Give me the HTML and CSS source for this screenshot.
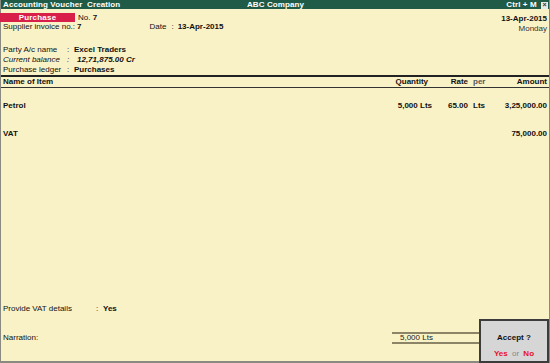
FILE: index.html
```html
<!DOCTYPE html>
<html lang="en">
<head>
    <meta charset="UTF-8">
    <title>Accounting Voucher Creation</title>
    <link rel="stylesheet" href="styles.css">
</head>
<body>
    <div class="screen">
        <div class="titlebar">
            <span class="title-left">Accounting Voucher&nbsp; Creation</span>
            <span class="title-center">ABC Company</span>
            <span class="title-right">Ctrl + M <span class="close-box">&#215;</span></span>
        </div>

        <div class="header">
            <div class="header-left">
                <div class="voucher-row">
                    <span class="voucher-type">Purchase</span>
                    <span class="voucher-no">No. <b>7</b></span>
                </div>
                <div class="supplier-row">
                    <span class="supplier-label">Supplier invoice no.:</span>
                    <b class="supplier-no">7</b>
                    <span class="date-label">Date</span>
                    <span class="colon">:</span>
                    <b>13-Apr-2015</b>
                </div>
            </div>
            <div class="header-right">
                <b>13-Apr-2015</b>
                <span class="day">Monday</span>
            </div>
        </div>

        <div class="party">
            <div class="field">
                <span class="field-label">Party A/c name</span>
                <span class="field-colon">:</span>
                <b>Excel Traders</b>
            </div>
            <div class="field italic">
                <span class="field-label">Current balance</span>
                <span class="field-colon">:</span>
                <b class="balance">12,71,875.00 Cr</b>
            </div>
            <div class="field">
                <span class="field-label">Purchase ledger</span>
                <span class="field-colon">:</span>
                <b>Purchases</b>
            </div>
        </div>

        <div class="items">
            <div class="item-row item-head">
                <span>Name of Item</span>
                <span class="num qty-head">Quantity</span>
                <span class="num">Rate</span>
                <span class="per">per</span>
                <span class="num">Amount</span>
            </div>
            <div class="item-row item-line first">
                <span>Petrol</span>
                <span class="num">5,000 Lts</span>
                <span class="num">65.00</span>
                <span class="per-val">Lts</span>
                <span class="num">3,25,000.00</span>
            </div>
            <div class="item-row item-line">
                <span>VAT</span>
                <span></span>
                <span></span>
                <span></span>
                <span class="num">75,000.00</span>
            </div>
        </div>

        <div class="footer">
            <div class="vat-row">
                <span class="vat-label">Provide VAT details</span>
                <span class="field-colon">:</span>
                <b>Yes</b>
            </div>
            <div class="narration-row">
                <span class="narration-label">Narration:</span>
                <div class="total-box">5,000 Lts</div>
            </div>
        </div>

        <div class="accept">
            <b class="accept-q">Accept ?</b>
            <div class="accept-opts"><b class="red">Yes</b> <span class="or">or</span> <b class="red">No</b></div>
        </div>
    </div>
</body>
</html>
```

FILE: styles.css
```css
body {
    margin: 0;
    font-family: "Liberation Sans", Arial, sans-serif;
    font-size: 8px;
    color: #111;
}
.screen {
    position: relative;
    width: 550px;
    height: 363px;
    box-sizing: border-box;
    background-color: #f9f2c7;
    border-left: 1px solid #8a8a80;
    border-right: 1px solid #8a8a80;
    border-bottom: 2px solid #8a8a80;
    display: flex;
    flex-direction: column;
    line-height: 10px;
}
.titlebar {
    height: 9px;
    background-color: #1f5b47;
    color: #fff;
    font-weight: bold;
    font-size: 8px;
    line-height: 9px;
    display: grid;
    grid-template-columns: 1fr auto 1fr;
    padding: 0 1px 0 2px;
    letter-spacing: 0.1px;
}
.title-right {
    text-align: right;
}
.close-box {
    display: inline-block;
    width: 7px;
    height: 7px;
    line-height: 6px;
    font-size: 7px;
    text-align: center;
    background: #e8e8e8;
    color: #333;
    margin-left: 2px;
    letter-spacing: 0;
}
.header {
    display: flex;
    justify-content: space-between;
    margin-top: 4px;
    padding-right: 2px;
}
.voucher-row {
    display: flex;
    align-items: center;
    height: 9px;
}
.voucher-type {
    width: 75px;
    height: 9px;
    line-height: 9px;
    background-color: #d81f4a;
    color: #fff;
    font-weight: bold;
    text-align: center;
    margin-left: -1px;
    letter-spacing: 0.2px;
}
.voucher-no {
    margin-left: 3px;
}
.supplier-row {
    display: flex;
    padding-left: 2px;
}
.supplier-no {
    margin-left: 2px;
}
.date-label {
    margin-left: 68px;
}
.colon {
    margin: 0 4px 0 5px;
}
.header-right {
    display: flex;
    flex-direction: column;
    align-items: flex-end;
    padding-top: 1px;
}
.day {
    color: #333;
}
.party {
    margin-top: 11px;
    padding-left: 2px;
}
.field {
    display: flex;
    height: 10px;
}
.field-label {
    width: 64px;
}
.field-colon {
    width: 7px;
}
.italic {
    font-style: italic;
}
.balance {
    margin-left: 3px;
}
.items {
    flex: 1;
    border-top: 2px solid #222;
}
.item-row {
    display: grid;
    grid-template-columns: 1fr 80px 36px 21px 58px;
    padding: 0 2px;
}
.item-head {
    height: 10px;
    border-bottom: 1px solid #333;
    font-weight: bold;
}
.qty-head {
    padding-right: 4px;
}
.num {
    text-align: right;
}
.per {
    color: #555;
    padding-left: 5px;
}
.per-val {
    padding-left: 5px;
    font-weight: bold;
}
.item-line {
    font-weight: bold;
    margin-top: 18px;
}
.item-line.first {
    margin-top: 13px;
}
.footer {
    height: 61px;
    padding-left: 2px;
    padding-top: 4px;
    box-sizing: border-box;
}
.vat-row {
    display: flex;
}
.vat-label {
    width: 93px;
}
.narration-row {
    display: flex;
    align-items: center;
    margin-top: 18px;
}
.narration-label {
    width: 389px;
}
.total-box {
    width: 82px;
    height: 8px;
    line-height: 8px;
    padding-left: 8px;
    border-top: 2px solid #8b8466;
    border-bottom: 2px solid #8b8466;
    color: #222;
}
.accept {
    position: absolute;
    right: 0;
    bottom: -2px;
    width: 70px;
    height: 44px;
    box-sizing: border-box;
    background-color: #d6d6d6;
    border: 2px solid #3c3c3c;
    display: flex;
    flex-direction: column;
    align-items: center;
    justify-content: space-between;
    padding: 12px 0 2px;
}
.red {
    color: #e8102a;
}
.or {
    color: #888;
    margin: 0 2px;
}
```
